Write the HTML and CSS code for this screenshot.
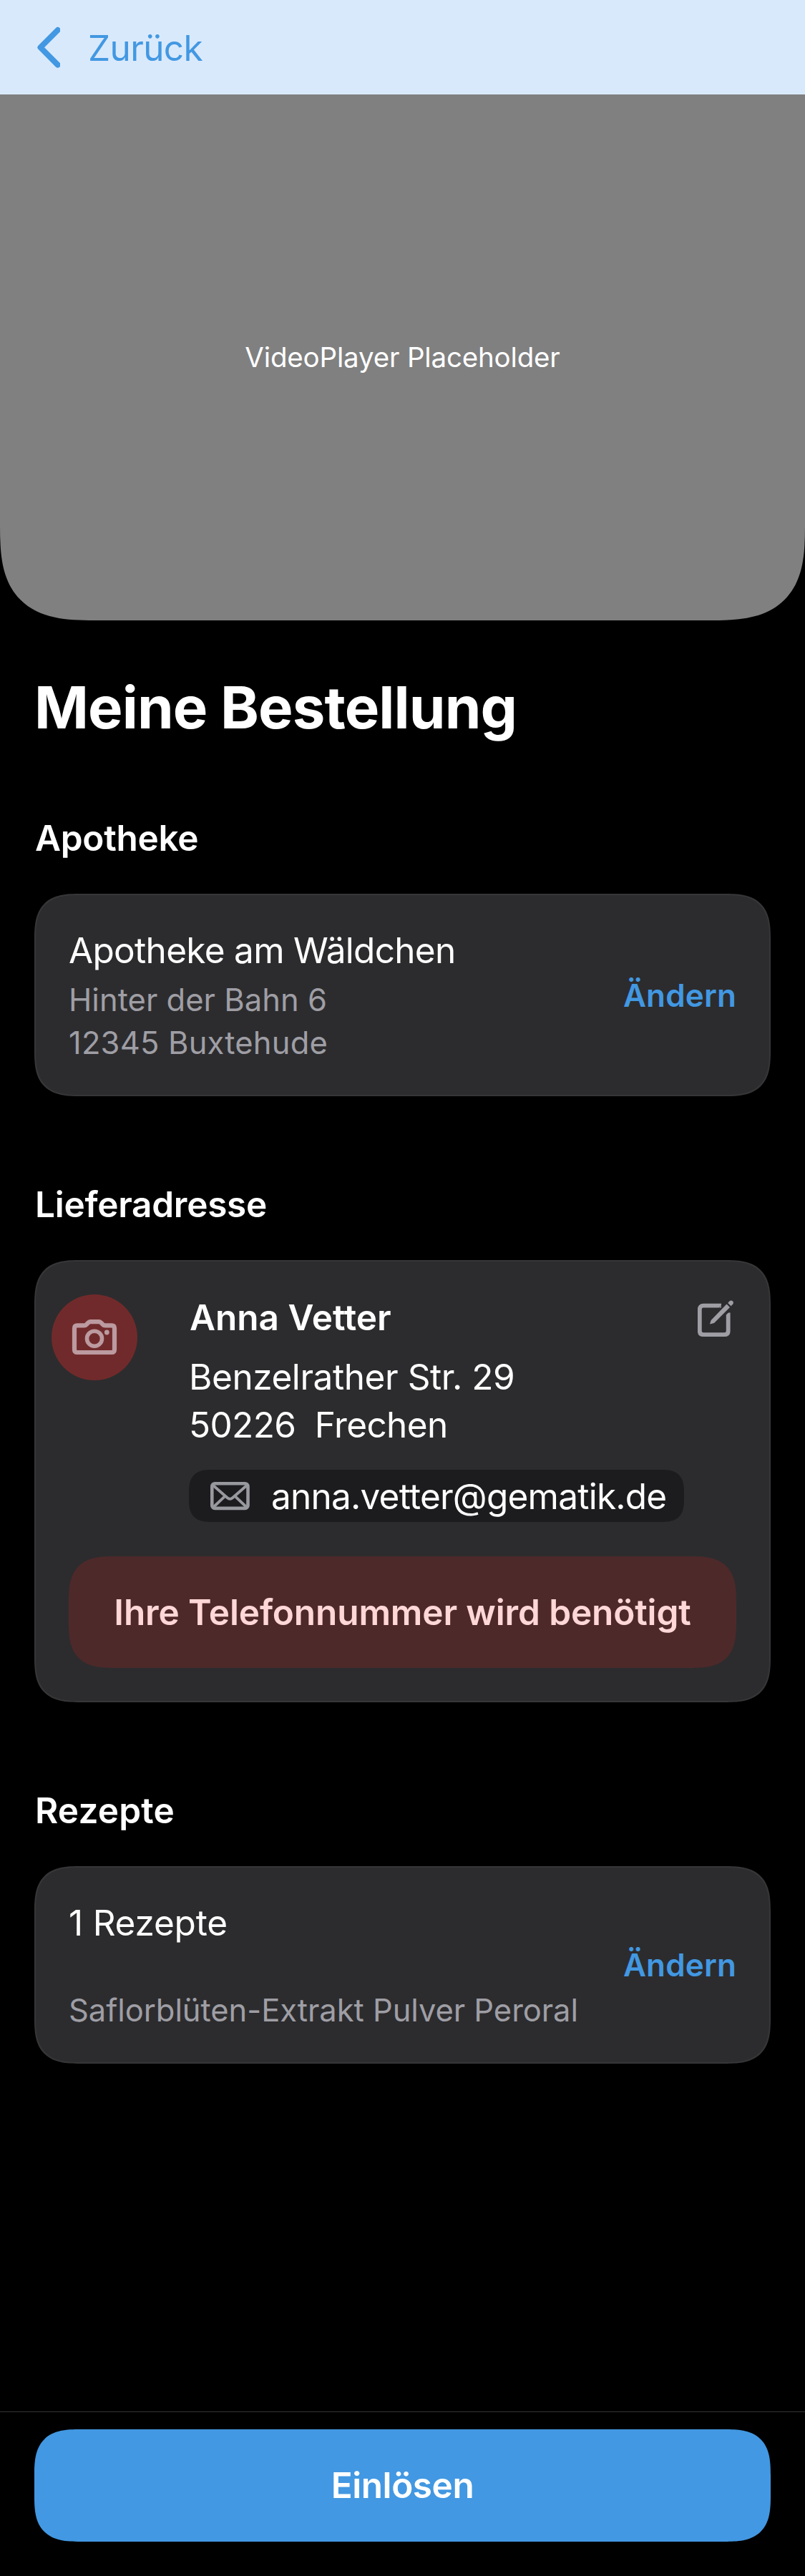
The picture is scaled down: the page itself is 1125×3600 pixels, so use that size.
FILE: index.html
```
<!DOCTYPE html>
<html lang="de">
<head>
<meta charset="utf-8">
<meta name="viewport" content="width=device-width">
<title>Meine Bestellung</title>
<link rel="stylesheet" href="styles.css">
</head>
<body>
<div class="screen">
  <header class="navbar">
    <a class="back">
      <svg class="back-icon" width="36" height="60" viewBox="0 0 36 60" fill="none" stroke="currentColor" stroke-width="8" stroke-linecap="round" stroke-linejoin="round"><path d="M32.700 6 8.500 30.300 32.700 54.600"/></svg>
      <span class="back-label">Zurück</span>
    </a>
  </header>
  <div class="video"><span class="video-label">VideoPlayer Placeholder</span></div>
  <main class="content">
    <h1 class="title">Meine Bestellung</h1>

    <section class="section">
      <h2 class="heading apotheke">Apotheke</h2>
      <div class="card pharmacy">
        <div class="card-text">
          <p class="primary pharmacy-name">Apotheke am Wäldchen</p>
          <p class="secondary street">Hinter der Bahn 6</p>
          <p class="secondary city">12345 Buxtehude</p>
        </div>
        <a class="change">Ändern</a>
      </div>
    </section>

    <section class="section">
      <h2 class="heading lieferadresse">Lieferadresse</h2>
      <div class="card address">
        <div class="contact">
          <div class="avatar">
            <svg width="120" height="120" viewBox="0 0 120 120" fill="none" stroke="currentColor" stroke-width="6.200" stroke-linejoin="round"><path d="M36 43.400H45.500Q47.500 43.400 49 41.800L51 39.700Q52.700 38.100 54.500 38.100H66Q67.800 38.100 69.500 39.700L71.500 41.800Q73 43.400 75 43.400H84Q88 43.400 88 47.400V77Q88 81 84 81H36Q32 81 32 77V47.400Q32 43.400 36 43.400Z"/><circle cx="60" cy="61.700" r="10.500" stroke-width="5.600"/><circle cx="77.300" cy="53" r="3.400" fill="currentColor" stroke="none"/></svg>
          </div>
          <div class="contact-text">
            <p class="name">Anna Vetter</p>
            <p class="primary line-street">Benzelrather Str. 29</p>
            <p class="primary line-city">50226 &nbsp;Frechen</p>
            <div class="mail">
              <svg class="mail-icon" width="55" height="40" viewBox="0 0 55 40" fill="none" stroke="currentColor" stroke-width="4.600"><rect x="2.300" y="2.300" width="50.200" height="34.600" rx="4"/><path stroke-width="3.800" d="M3.500 4.500 23.500 22Q27.400 25.500 31.300 22L51.300 4.500M4 35.500 21 19.300M50.800 35.500 33.800 19.300"/></svg>
              <span class="mail-text">anna.vetter@gematik.de</span>
            </div>
          </div>
          <svg class="edit" width="51" height="52" viewBox="0 0 51 52"><path fill="none" stroke="currentColor" stroke-width="5.800" d="M33 7.700H8Q2.800 7.700 2.800 12.900V43Q2.800 48.200 8 48.200H37.500Q42.700 48.200 42.700 43V17.500"/><path fill="#2c2c2e" d="M29 11.500 36.500 3.500V4L29 12ZM39.500 21 46 14V12.500L39 16Z"/><path fill="currentColor" d="M17 33.500 18.700 28 40.500 5.600 45 10 23 32Z"/><path fill="currentColor" d="M42.200 3.900 44.400 1.500Q46.800-.6 49 1.400 51 3.600 48.800 6L46.600 8.300Z"/></svg>
        </div>
        <div class="alert">Ihre Telefonnummer wird benötigt</div>
      </div>
    </section>

    <section class="section">
      <h2 class="heading rezepte">Rezepte</h2>
      <div class="card prescriptions">
        <div class="card-text">
          <p class="primary count">1 Rezepte</p>
          <p class="secondary drug">Saflorblüten-Extrakt Pulver Peroral</p>
        </div>
        <a class="change">Ändern</a>
      </div>
    </section>
  </main>
  <footer class="footer"><button class="redeem">Einlösen</button></footer>
</div>
</body>
</html>
```
FILE: styles.css
```
* { box-sizing: border-box; }
body { margin: 0; background: #000; color: #fff; font-family: Inter, "Liberation Sans", sans-serif; }
h1, h2, p { margin: 0; }

.screen { width: 1125px; height: 3600px; display: flex; flex-direction: column; }

.navbar { height: 132px; flex: none; padding: 0 48px; background: #d9e9fc; }
.back { display: flex; align-items: center; height: 132px; color: #4298e2; }
.back-icon { flex: none; margin-right: 39px; }
.back-label { font-size: 49.5px; line-height: 60px; letter-spacing: -0.0125em; margin-top: 1px; }

.video { height: 735px; flex: none; display: flex; align-items: center; justify-content: center; background: #808080; border-radius: 0 0 96px 96px; }
.video-label { font-size: 38.5px; line-height: 48px; letter-spacing: -0.0045em; margin-bottom: 2px; }

.content { flex: 1; padding: 72px 48px 0; }
.title { font-size: 81.5px; line-height: 100px; font-weight: 700; letter-spacing: -0.0106em; margin-bottom: -19px; }

.section { padding-top: 121px; }
.heading { font-size: 49.5px; line-height: 60px; font-weight: 600; margin: 0 0 48px 1px; }
.apotheke { letter-spacing: -0.0055em; }
.lieferadresse { letter-spacing: -0.0055em; }
.rezepte { letter-spacing: 0.0037em; }

.card { background: #2c2c2e; border: 2px solid #363638; border-radius: 48px; }
.pharmacy, .prescriptions { display: flex; align-items: center; justify-content: space-between; padding: 0 46px; }
.pharmacy { height: 283px; }
.prescriptions { height: 276px; }

.primary { font-size: 49.5px; line-height: 60px; }
.secondary { font-size: 43.5px; line-height: 60px; color: #9f9ea5; }
.pharmacy-name { letter-spacing: -0.014em; margin-bottom: 9px; }
.street { letter-spacing: 0.0007em; }
.city { letter-spacing: 0.0043em; }
.pharmacy .card-text { padding-top: 3px; }
.count { letter-spacing: -0.0041em; margin-bottom: 62px; }
.drug { letter-spacing: -0.0012em; }
.prescriptions .card-text { padding-top: 4px; }
.change { font-size: 44px; line-height: 54px; font-weight: 600; letter-spacing: 0.0032em; color: #4298e2; }

.address { height: 618px; padding: 46px 46px 46px 22px; }
.contact { display: flex; align-items: flex-start; }
.avatar { flex: none; width: 120px; height: 120px; border-radius: 50%; background: #712a2b; color: #bb9aa0; }
.avatar svg { display: block; }
.contact-text { flex: 1; margin-left: 72px; padding-top: 2px; display: flex; flex-direction: column; align-items: flex-start; }
.name { font-size: 49.5px; line-height: 60px; font-weight: 600; margin-bottom: 20px; margin-left: 1px; }
.line-street, .line-city { line-height: 67px; }
.line-street { letter-spacing: -0.0086em; }
.line-city { letter-spacing: -0.0126em; margin-bottom: 29px; }
.mail { height: 73px; width: 692px; display: flex; align-items: center; padding-left: 30px; gap: 30px; border-radius: 24px; background: #1c1c1e; }
.mail-icon { flex: none; color: #98989f; }
.mail-text { font-size: 49.5px; line-height: 60px; letter-spacing: -0.0154em; }
.edit { flex: none; color: #9f9ea5; margin: 8px 3px 0 0; }
.alert { height: 156px; margin: 48px 0 0 24px; display: flex; align-items: center; justify-content: center; border-radius: 48px; background: #4e292a; color: #ffd7d7; font-size: 49.5px; line-height: 60px; font-weight: 600; letter-spacing: -0.0024em; white-space: nowrap; }

.footer { flex: none; height: 230px; border-top: 1px solid #343436; padding: 24px 48px 0; }
.redeem { display: block; width: 100%; height: 157px; border: 0; padding: 0 0 2px; border-radius: 48px; background: #4298e2; color: #fff; font-family: inherit; font-size: 49.5px; line-height: 60px; font-weight: 600; letter-spacing: -0.0086em; }

/* Continuous corners, where the browser can draw them */
@supports (corner-shape: superellipse(1.5)) {
  .video, .card, .mail, .alert, .redeem { corner-shape: superellipse(1.5); }
  .video { border-radius: 0 0 132px 132px; }
  .card, .alert, .redeem { border-radius: 64px; }
  .mail { border-radius: 33px; }
}
```
